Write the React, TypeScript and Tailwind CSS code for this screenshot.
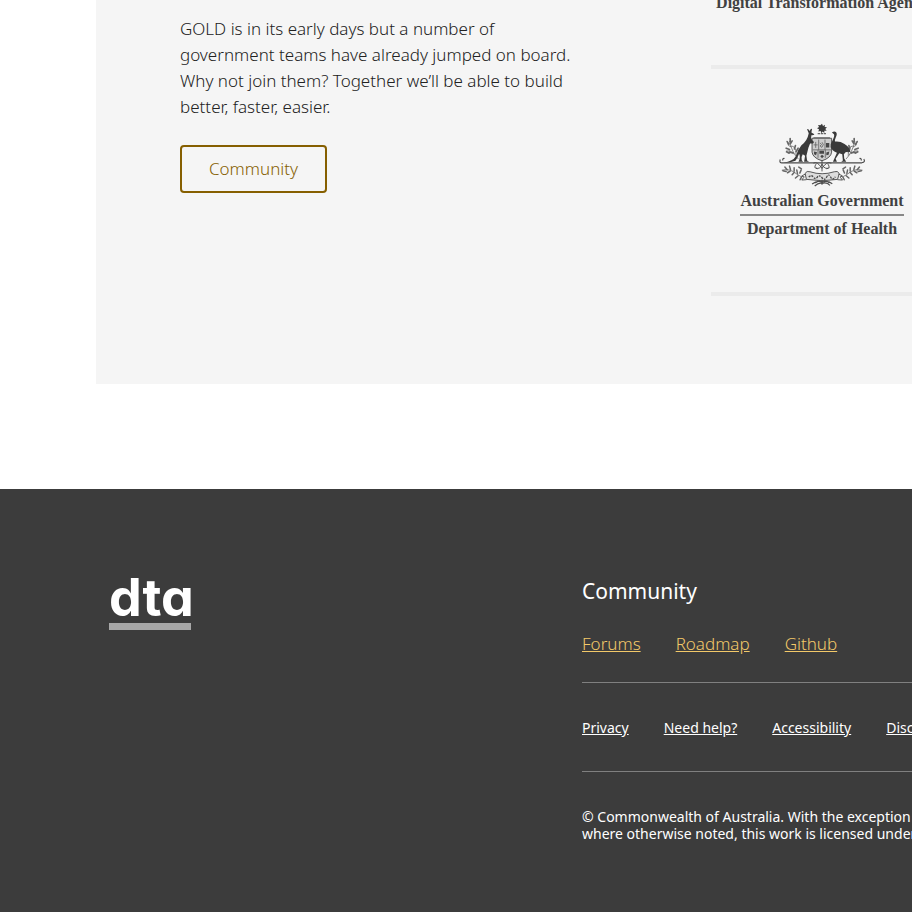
import React from "react";

const communityLinks = ["Forums", "Roadmap", "Github"];
const siteLinks = ["Privacy", "Need help?", "Accessibility", "Disclaimer"];

function Sprig() {
  return (
    <g fill="none" stroke="#666" strokeWidth="2.4" strokeLinecap="round">
      <path d="M294 178 Q276 160 268 126" />
      <path d="M280 162 Q270 150 259 154 M288 168 Q290 150 282 142 M272 142 Q262 140 262 130 M272 140 Q282 138 284 148" />
      <path d="M261 126l5 8M270 117l0 9M276 124l-5 8M258 146l10 4M268 158l11 2M286 138l-3 10M294 146l-6 10M259 157l8 4" strokeWidth="5" />
      <path d="M246 212 Q270 206 290 224 Q302 234 312 232" />
      <path d="M254 203l7 8M268 200l3 10M282 205l0 10M248 214l10 2M262 220l8-5M276 226l6-7M290 212l2 10M303 212l-4 9M286 236l8-7M300 241l4-8M296 203l8 5" strokeWidth="4.5" />
    </g>
  );
}

function CoatOfArms() {
  return (
    <svg viewBox="234 70 264 196" className="h-[65px] w-[88px]" role="img" aria-label="Commonwealth Coat of Arms">
      <path
        fill="#3c3c3c"
        d="M366 72l3 7 6-4-1 7 7 1-5 5 4 5-7 0 0 7-5-4-4 5-2-7-7 2 2-7-6-3 6-4-3-6 7 1z"
      />
      <path d="M353 102H379" stroke="#666" strokeWidth="4" strokeDasharray="7 2" />
      <Sprig />
      <g transform="matrix(-1 0 0 1 733 0)">
        <Sprig />
      </g>
      <path
        d="M240 180 Q236 192 248 190 H486 Q498 188 492 179 M248 183q-2-7 5-6M484 183q2-7-5-6"
        fill="none"
        stroke="#4a4a4a"
        strokeWidth="3.5"
      />
      <path d="M336 116h59v42q-2 17-29 26q-28-9-30-26z" fill="#ccc" stroke="#555" strokeWidth="3" />
      <g fill="none" stroke="#666" strokeWidth="2.5">
        <path d="M338 151h55M356 120v31M375 120v31M354 151v24M376 151v24M340 114h50" />
        <path d="M347 127v18M341 136h12M360 130l5 5-5 4 6 5M366 128l4 7-4 8" />
      </g>
      <g fill="#484848">
        <path d="M378 130h10v14h-10zM342 156l9 2-3 9-6-3zM358 154h14v9h-14zM379 159l9-3-2 10-7 1z" />
        <path d="M361 170l5-4 6 4-6 6z" />
      </g>
      <g fill="none" stroke="#4d4d4d" strokeWidth="2.8">
        <path d="M340 191Q351 184 366 207Q381 184 394 191M346 205Q360 212 366 194Q374 212 388 205M366 182v34M348 194q-9 13 5 14M384 194q9 13-5 14" />
        <path d="M315 222Q320 213 330 217Q366 229 403 217Q413 213 418 222L413 240Q366 248 319 240Z" fill="#ddd" />
        <path d="M316 224l-10 5 5 5-6 8 14-1M416 224l11 5-6 5 7 8-15-1" />
        <path d="M326 233q8-8 14 0t12 0t14 2t14-2t12 0t14-1" strokeWidth="4" strokeDasharray="6 3" />
        <path d="M366 241v15M336 254Q352 242 366 248Q382 242 397 253M344 260q12-11 22-8q14-5 24 6M354 245l-8 6M380 245l8 6" strokeWidth="3.4" />
      </g>
      <path
        fill="#3a3a3a"
        d="M326 101L321 89Q324 86 329 94Q332 86 336 88L334 99L343 104Q341 108 334 107Q331 114 337 123L342 127L339 132L330 132L325 145L322 157L319 169L321 183L327 187H312L315 169L308 164Q303 170 305 182L309 187H295Q302 174 297 163Q291 178 286 184Q270 191 250 189Q279 185 287 170Q293 150 304 137Q322 124 326 101Z"
      />
      <path
        fill="#3a3a3a"
        d="M396 99Q402 94 408 97Q413 102 408 112Q404 121 405 126Q420 124 434 133Q450 142 452 158Q444 155 437 158L432 164L433 177L439 187H424L429 183L427 164L418 161L407 178L411 187H399L403 178L411 160Q397 154 392 143Q390 133 397 124Q405 109 402 104Z"
      />
    </svg>
  );
}

function AgencyTile({ name }: { name: string }) {
  return (
    <div className="flex h-[227px] flex-col items-center border-b-4 border-[#ebebeb] pt-[54px] font-['Liberation_Serif',serif] font-bold text-[#414141]">
      <CoatOfArms />
      <div className="mt-1 whitespace-nowrap border-b-2 border-[#888] pb-1 text-base leading-[18px]">Australian Government</div>
      <div className="mt-1 whitespace-nowrap text-base leading-[18px]">{name}</div>
    </div>
  );
}

export default function App() {
  return (
    <div className="min-h-screen overflow-hidden bg-white font-['Noto_Sans',sans-serif] text-[#222222]">
      <main className="pb-[105px]">
        <section className="ml-24 flex h-96 overflow-hidden bg-[#f5f5f5] pl-[84px]">
          <div className="w-[531px] shrink-0 pt-4">
            <p className="text-[17px] leading-[26px] font-light">
              GOLD is in its early days but a number of
              <br />
              government teams have already jumped on board.
              <br />
              Why not join them? Together we’ll be able to build
              <br />
              better, faster, easier.
            </p>
            <button type="button" className="mt-[25px] h-12 w-[147px] rounded border-2 border-[#865f00] text-[17px] font-light text-[#865f00]">
              Community
            </button>
          </div>
          <div className="w-[222px] shrink-0">
            <div className="flex h-[69px] justify-center border-b-4 border-[#ebebeb] font-['Liberation_Serif',serif] text-base leading-[18px] font-bold whitespace-nowrap text-[#414141]">
              <div className="-mt-1.5">Digital Transformation Agency</div>
            </div>
            <AgencyTile name="Department of Health" />
          </div>
        </section>
      </main>
      <footer className="flex min-h-[423px] bg-[#3c3c3c] pt-[84px] pl-[109px] text-white">
        <div className="w-[473px] shrink-0">
          <div className="w-[82px]">
            <div className="border-b-[7px] border-[#a8a8a8] font-['Inter',sans-serif] text-[52px] leading-[50px] font-bold [font-feature-settings:'cv11']">
              dta
            </div>
          </div>
        </div>
        <div className="w-[460px] shrink-0">
          <h2 className="text-[21px] leading-9">Community</h2>
          <nav aria-label="Community" className="mt-5 flex gap-[35px] border-b border-[#808080] pt-[2px] pb-[25px] text-[17px] leading-[26px] font-light text-[#f3c969]">
            {communityLinks.map((link) => (
              <a key={link} href="#" className="underline">
                {link}
              </a>
            ))}
          </nav>
          <nav aria-label="Site" className="flex gap-[35px] border-b border-[#808080] pt-[34px] pb-[33px] text-sm leading-[21px]">
            {siteLinks.map((link) => (
              <a key={link} href="#" className="whitespace-nowrap underline">
                {link}
              </a>
            ))}
          </nav>
          <p className="mt-9 text-sm leading-[17px] whitespace-nowrap">
            © Commonwealth of Australia. With the exception of the
            <br />
            where otherwise noted, this work is licensed under the MIT
          </p>
        </div>
      </footer>
    </div>
  );
}
